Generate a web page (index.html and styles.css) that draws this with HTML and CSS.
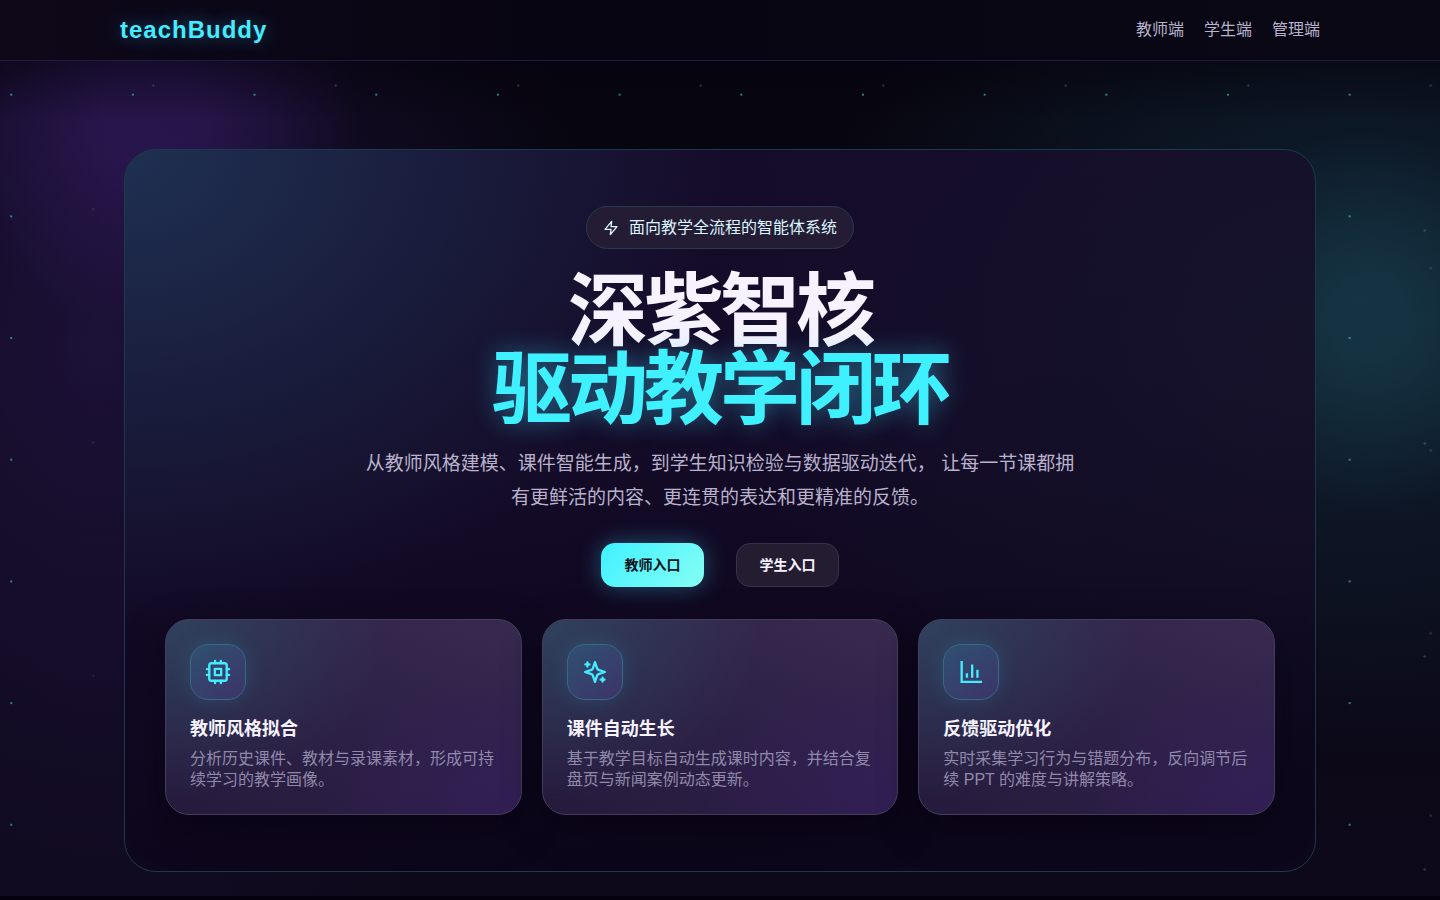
FILE: index.html
```html
<!DOCTYPE html>
<html lang="zh-CN">
<head>
    <meta charset="UTF-8">
    <meta name="viewport" content="width=device-width, initial-scale=1.0">
    <title>teachBuddy</title>
    <link rel="stylesheet" href="styles.css">
</head>
<body>
    <header class="topbar">
        <div class="topbar-inner">
            <a class="brand" href="#">teachBuddy</a>
            <nav class="nav">
                <a href="#teacher">教师端</a>
                <a href="#student">学生端</a>
                <a href="#admin">管理端</a>
            </nav>
        </div>
    </header>

    <main class="hero">
        <!-- Background stars -->
        <div class="stars"></div>

        <section class="panel">
            <p class="badge">
                <svg width="16" height="16" viewBox="0 0 24 24" fill="none" stroke="currentColor" stroke-width="2" stroke-linecap="round" stroke-linejoin="round"><path d="M13 2 3 14h9l-1 8 10-12h-9l1-8z"/></svg>
                <span>面向教学全流程的智能体系统</span>
            </p>
            <h1 class="title">深紫智核<span class="title-accent">驱动教学闭环</span></h1>
            <p class="subtitle">从教师风格建模、课件智能生成，到学生知识检验与数据驱动迭代， 让每一节课都拥有更鲜活的内容、更连贯的表达和更精准的反馈。</p>

            <div class="actions">
                <button class="btn btn-primary" type="button">教师入口</button>
                <button class="btn" type="button">学生入口</button>
            </div>

            <!-- Feature cards -->
            <div class="cards">
                <article class="card">
                    <div class="card-icon">
                        <svg width="28" height="28" viewBox="0 0 24 24" fill="none" stroke="currentColor" stroke-width="2" stroke-linecap="round" stroke-linejoin="round"><rect x="4.5" y="4.5" width="15" height="15" rx="2"/><rect x="9.3" y="9.3" width="5.4" height="5.4"/><path d="M9.5 2.5v2M14.5 2.5v2M9.5 19.5v2M14.5 19.5v2M2.5 9.5h2M2.5 14.5h2M19.5 9.5h2M19.5 14.5h2"/></svg>
                    </div>
                    <h2>教师风格拟合</h2>
                    <p>分析历史课件、教材与录课素材，形成可持续学习的教学画像。</p>
                </article>
                <article class="card">
                    <div class="card-icon">
                        <svg width="28" height="28" viewBox="0 0 24 24" fill="none" stroke="currentColor" stroke-width="2" stroke-linecap="round" stroke-linejoin="round"><path d="m12 3.5-1.8 5.4a2 2 0 0 1-1.3 1.3L3.5 12l5.4 1.8a2 2 0 0 1 1.3 1.3L12 20.5l1.8-5.4a2 2 0 0 1 1.3-1.3l5.4-1.8-5.4-1.8a2 2 0 0 1-1.3-1.3Z"/><path d="M5.5 3.8v3.4M3.8 5.5h3.4M18.5 16.8v3.4M16.8 18.5h3.4"/></svg>
                    </div>
                    <h2>课件自动生长</h2>
                    <p>基于教学目标自动生成课时内容，并结合复盘页与新闻案例动态更新。</p>
                </article>
                <article class="card">
                    <div class="card-icon">
                        <svg width="28" height="28" viewBox="0 0 24 24" fill="none" stroke="currentColor" stroke-width="2"><path d="M4 2.5v18h17.5M13 17V5.5M17.5 17v-7M8.5 17v-4"/></svg>
                    </div>
                    <h2>反馈驱动优化</h2>
                    <p>实时采集学习行为与错题分布，反向调节后续 PPT 的难度与讲解策略。</p>
                </article>
            </div>
        </section>
    </main>
</body>
</html>
```
FILE: styles.css
```css
* {
    box-sizing: border-box;
}

body {
    margin: 0;
    background: #05020e;
    color: #f6f2ff;
    font-family: "Liberation Sans", "Noto Sans CJK SC", sans-serif;
    font-size: 16px;
}

h1, h2, p {
    margin: 0;
}

/* Top bar */
.topbar {
    position: relative;
    z-index: 2;
    background: linear-gradient(90deg, #0e0819 0%, #080512 40%, #090814 100%);
    border-bottom: 1px solid #231b40;
}

.topbar-inner {
    max-width: 1200px;
    height: 60px;
    margin: 0 auto;
    display: flex;
    align-items: center;
    justify-content: space-between;
}

.brand {
    color: #44ecff;
    font-size: 24px;
    font-weight: 700;
    letter-spacing: 1px;
    text-decoration: none;
    text-shadow: 0 0 18px rgba(63, 200, 255, 0.45);
}

.nav {
    display: flex;
    gap: 20px;
}

.nav a {
    color: #b9b2cc;
    line-height: 24px;
    text-decoration: none;
}

/* Hero */
.hero {
    position: relative;
    overflow: hidden;
    padding: 88px 24px 24px;
    background:
        linear-gradient(180deg, rgba(4, 2, 11, 0.45), transparent 60px),
        radial-gradient(circle at 150px 60px, rgba(48, 26, 92, 0.65) 50px, transparent 210px),
        radial-gradient(circle at 1370px 260px, rgba(24, 62, 76, 0.6) 40px, transparent 190px),
        radial-gradient(ellipse 560px 460px at 1360px 240px, rgba(18, 44, 62, 0.75), transparent),
        radial-gradient(ellipse 500px 700px at 100px 280px, rgba(38, 22, 74, 0.65), transparent),
        linear-gradient(180deg, #07050f, #0d091a);
}

.stars {
    position: absolute;
    inset: 0;
    transform: scale(1.014);
    background-image:
        radial-gradient(circle, rgba(68, 200, 200, 0.6) 1px, transparent 1px),
        radial-gradient(circle, rgba(150, 150, 180, 0.25) 1px, transparent 1px),
        radial-gradient(circle, rgba(150, 150, 180, 0.3) 1px, transparent 1px),
        radial-gradient(circle, rgba(150, 150, 180, 0.18) 1px, transparent 1px);
    background-size: 120px 120px, 180px 180px, 210px 210px, 230px 230px;
    background-position: 81px 99px, 71px 120px, 50px 68px, 217px 37px;
}

.panel {
    position: relative;
    max-width: 1192px;
    margin: 0 auto;
    padding: 56px 40px;
    border: 1px solid #1d3a4c;
    border-radius: 32px;
    background:
        radial-gradient(ellipse 600px 480px at 0 0, rgba(32, 54, 88, 0.85), transparent),
        radial-gradient(ellipse 600px 500px at 100% 25%, rgba(22, 21, 44, 0.8), transparent),
        linear-gradient(170deg, #160c2b 0%, #140b28 40%, #0c061a 85%, #0d071c 100%);
    text-align: center;
}

.badge {
    display: inline-flex;
    align-items: center;
    gap: 10px;
    height: 43px;
    padding: 0 16px;
    border: 1px solid #2b3a4c;
    border-radius: 22px;
    background: #241c34;
    color: #dcf6ff;
}

.badge span {
    padding-bottom: 4px;
}

.title {
    margin-top: 24px;
    color: #f6f2ff;
    font-size: 80px;
    font-weight: 700;
    line-height: 78px;
    letter-spacing: -4px;
}

.title-accent {
    display: block;
    color: #3ff0ff;
    text-shadow: 0 0 24px rgba(63, 220, 255, 0.45);
}

.subtitle {
    max-width: 720px;
    margin: 18px auto 0;
    color: #b9b2cc;
    font-size: 19px;
    line-height: 34px;
}

.actions {
    display: flex;
    justify-content: center;
    gap: 32px;
    margin-top: 28px;
}

.btn {
    min-width: 103px;
    height: 44px;
    padding: 0 22px 3px;
    border: 1px solid #383048;
    border-radius: 14px;
    background: #241d32;
    color: #f6f2ff;
    font-family: inherit;
    font-size: 14px;
    font-weight: 700;
    cursor: pointer;
}

.btn-primary {
    border-color: transparent;
    background: linear-gradient(135deg, #3ff0ff, #86fff4) border-box;
    color: #06121c;
    box-shadow: 0 0 22px rgba(63, 220, 255, 0.35);
}

/* Feature cards */
.cards {
    display: grid;
    grid-template-columns: repeat(3, 1fr);
    gap: 20px;
    margin-top: 32px;
    text-align: left;
}

.card {
    padding: 24px;
    border: 1px solid #453e5a;
    border-radius: 24px;
    background:
        radial-gradient(ellipse 220px 180px at 0 0, rgba(48, 76, 100, 0.75), transparent),
        radial-gradient(ellipse 220px 150px at 100% 100%, rgba(52, 30, 92, 0.7), transparent),
        linear-gradient(200deg, #38294f 0%, #2d2147 50%, #261a3c 100%);
    box-shadow: 0 14px 36px rgba(5, 0, 16, 0.5);
}

.card-icon {
    display: flex;
    align-items: center;
    justify-content: center;
    width: 56px;
    height: 56px;
    border: 1px solid #356b86;
    border-radius: 18px;
    background: linear-gradient(145deg, #2f5070, #3c3468);
    color: #44ecff;
    box-shadow: 0 0 20px rgba(63, 200, 240, 0.15);
}

.card h2 {
    margin-top: 16px;
    font-size: 18px;
    line-height: 26px;
}

.card p {
    margin-top: 6px;
    color: #9189ab;
    line-height: 21px;
}

@media (max-width: 800px) {
    .topbar-inner {
        padding: 0 20px;
    }

    .panel {
        padding: 40px 20px;
    }

    .title {
        font-size: 48px;
        line-height: 52px;
    }

    .cards {
        grid-template-columns: 1fr;
    }
}
```
